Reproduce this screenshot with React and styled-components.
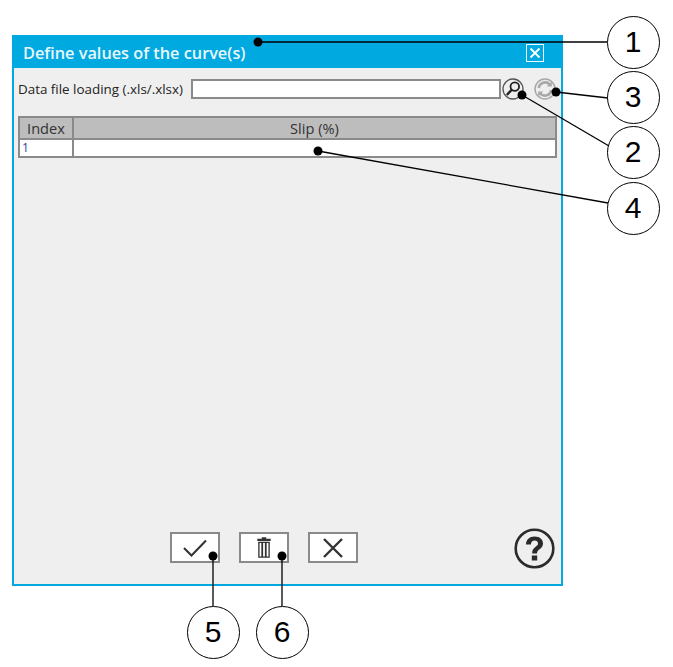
import React from "react";
import styled, { createGlobalStyle } from "styled-components";

const Global = createGlobalStyle`
  html, body { margin: 0; background: #fff; }
  body { font-family: "Open Sans", sans-serif; }
`;

const Stage = styled.div`
  position: relative;
  width: 673px;
  height: 667px;
  padding: 35px 0 0 12px;
  box-sizing: border-box;
  overflow: hidden;
`;

const Dialog = styled.div`
  width: 551px;
  height: 551px;
  box-sizing: border-box;
  border: 2px solid #00a9e0;
  background: #efefef;
  display: flex;
  flex-direction: column;
`;

const TitleBar = styled.div`
  height: 31px;
  flex: none;
  background: #00a9e0;
  color: #e8f7fc;
  display: flex;
  align-items: center;
  justify-content: space-between;
  padding: 0 17px 0 9px;
  font-size: 16.3px;
  font-weight: 600;
`;

const CloseBox = styled.div`
  width: 18px;
  height: 18px;
  border: 1.5px solid #f2fbfe;
  display: flex;
  align-items: center;
  justify-content: center;
  box-sizing: border-box;
`;

const Body = styled.div`
  flex: 1;
  display: flex;
  flex-direction: column;
  padding: 11px 5px 0 5px;
`;

const FileRow = styled.div`
  display: flex;
  align-items: center;
  height: 20px;
  font-size: 13.4px;
  color: #222;
`;

const FileLabel = styled.span`
  width: 172px;
  flex: none;
  white-space: nowrap;
  margin-left: -1px;
  margin-right: 1px;
`;

const FileInput = styled.div`
  width: 310px;
  height: 20px;
  flex: none;
  box-sizing: border-box;
  border: 2px solid #8a8a8a;
  background: #fff;
`;

const RoundIcon = styled.div`
  width: 24px;
  height: 24px;
  flex: none;
  margin-left: ${(p) => p.$gap}px;
`;

const Table = styled.div`
  margin: 17px 0 0 -1px;
  width: 539px;
  border: 2px solid #8a8a8a;
  box-sizing: border-box;
`;

const Row = styled.div`
  display: grid;
  grid-template-columns: 54px 1fr;
  height: ${(p) => p.$h}px;
  background: ${(p) => (p.$head ? "#bdbdbd" : "#fff")};
  border-bottom: ${(p) => (p.$head ? "2px solid #8a8a8a" : "none")};
  box-sizing: content-box;
`;

const Cell = styled.div`
  border-right: ${(p) => (p.$first ? "2px solid #8a8a8a" : "none")};
  display: flex;
  align-items: center;
  justify-content: ${(p) => (p.$left ? "flex-start" : "center")};
  padding-left: ${(p) => (p.$left ? "2px" : "0")};
  font-size: ${(p) => (p.$small ? "12px" : "14.6px")};
  color: ${(p) => (p.$small ? "#1a4a9a" : "#333")};
  line-height: 1;
`;

const Footer = styled.div`
  flex: none;
  height: 31px;
  margin-bottom: 21px;
  position: relative;
  display: flex;
  justify-content: center;
  gap: 19px;
  padding-right: 48px;
`;

const ActionButton = styled.button`
  width: 50px;
  height: 31px;
  padding: 0;
  box-sizing: border-box;
  border: 2px solid #8a8a8a;
  background: #fff;
  display: flex;
  align-items: center;
  justify-content: center;
`;

const HelpIcon = styled.div`
  position: absolute;
  right: 6px;
  top: -4px;
  width: 41px;
  height: 41px;
`;

const Leaders = styled.svg`
  position: absolute;
  left: 0;
  top: 0;
  width: 673px;
  height: 667px;
  pointer-events: none;
`;

const Bubble = styled.div`
  position: absolute;
  left: ${(p) => p.$x - 26.5}px;
  top: ${(p) => p.$y - 26.5}px;
  width: 53px;
  height: 53px;
  box-sizing: border-box;
  border: 1px solid #000;
  border-radius: 50%;
  background: #fff;
  display: flex;
  align-items: center;
  justify-content: center;
  font-family: "Liberation Sans", Arial, sans-serif;
  font-size: 30px;
  color: #000;
`;

const leaders = [
  [258, 42, 607, 42],
  [556, 92, 608, 98],
  [522, 95, 609, 146],
  [318, 151, 608, 203],
  [213, 556, 213, 606],
  [282, 556, 282, 606],
];

const bubbles = [
  { n: 1, x: 633, y: 42 },
  { n: 3, x: 633, y: 97 },
  { n: 2, x: 633, y: 152 },
  { n: 4, x: 633, y: 208 },
  { n: 5, x: 213, y: 632 },
  { n: 6, x: 282, y: 632 },
];

export default function App() {
  return (
    <Stage>
      <Global />
      <Dialog>
        <TitleBar>
          <span>Define values of the curve(s)</span>
          <CloseBox>
            <svg width="12" height="12" viewBox="0 0 12 12">
              <path d="M1.5 1.5 10.5 10.5M10.5 1.5 1.5 10.5" stroke="#fff" strokeWidth="1.8" fill="none" />
            </svg>
          </CloseBox>
        </TitleBar>
        <Body>
          <FileRow>
            <FileLabel>Data file loading (.xls/.xlsx)</FileLabel>
            <FileInput />
            <RoundIcon $gap={0}>
              <svg width="24" height="24" viewBox="0 0 24 24" fill="none">
                <circle cx="12" cy="12" r="10" stroke="#555" strokeWidth="1.3" />
                <circle cx="13.8" cy="9.6" r="4.3" stroke="#222" strokeWidth="1.8" />
                <path d="M10.8 12.6 5.8 18" stroke="#222" strokeWidth="2.4" />
              </svg>
            </RoundIcon>
            <RoundIcon $gap={8}>
              <svg width="24" height="24" viewBox="0 0 24 24" fill="none">
                <circle cx="12" cy="12" r="10" stroke="#a8a8a8" strokeWidth="1.5" />
                <path d="M5.8 11a6.4 6.4 0 0 1 11-3.6" stroke="#a8a8a8" strokeWidth="2.6" />
                <path d="M18.2 13a6.4 6.4 0 0 1-11 3.6" stroke="#a8a8a8" strokeWidth="2.6" />
                <path d="M18.8 4.6v5h-5zM5.2 19.4v-5h5z" fill="#a8a8a8" />
              </svg>
            </RoundIcon>
          </FileRow>
          <Table>
            <Row $head $h={20}>
              <Cell $first>Index</Cell>
              <Cell>Slip (%)</Cell>
            </Row>
            <Row $h={16}>
              <Cell $first $left $small>1</Cell>
              <Cell />
            </Row>
          </Table>
        </Body>
        <Footer>
          <ActionButton>
            <svg width="26" height="20" viewBox="0 0 26 20" fill="none">
              <path d="M2 10 9.5 17.5 24 2.5" stroke="#333" strokeWidth="2" />
            </svg>
          </ActionButton>
          <ActionButton>
            <svg width="16" height="22" viewBox="0 0 18 24" fill="#333">
              <path d="M6.5 0h5v1.5h5V4h-15V1.5h5z" />
              <path d="M2.5 5h13v18h-13zM4 6.5v15h2v-15zM8 6.5v15h2v-15zM12 6.5v15h2v-15z" fillRule="evenodd" />
            </svg>
          </ActionButton>
          <ActionButton>
            <svg width="22" height="22" viewBox="0 0 22 22" fill="none">
              <path d="M2 2 20 20M20 2 2 20" stroke="#333" strokeWidth="2.4" />
            </svg>
          </ActionButton>
          <HelpIcon>
            <svg width="41" height="41" viewBox="0 0 41 41" fill="none">
              <circle cx="20.5" cy="20.5" r="18.8" stroke="#2b2b2b" strokeWidth="2.6" />
              <path
                d="M12 16.5c0-5 3.5-8 8.6-8s8.4 2.8 8.4 6.9c0 5.6-6 5.4-6 10h-4.8c0-6.6 5.8-6.4 5.8-9.8 0-1.8-1.4-3-3.4-3-2.1 0-3.6 1.5-3.7 3.9z"
                fill="#2b2b2b"
              />
              <rect x="17.8" y="27.5" width="5.4" height="5" fill="#2b2b2b" />
            </svg>
          </HelpIcon>
        </Footer>
      </Dialog>
      <Leaders viewBox="0 0 673 667">
        {leaders.map(([x1, y1, x2, y2], i) => (
          <g key={i}>
            <line x1={x1} y1={y1} x2={x2} y2={y2} stroke="#000" strokeWidth="1.3" />
            <circle cx={x1} cy={y1} r="4.5" fill="#000" />
          </g>
        ))}
      </Leaders>
      {bubbles.map((b) => (
        <Bubble key={b.n} $x={b.x} $y={b.y}>{b.n}</Bubble>
      ))}
    </Stage>
  );
}
